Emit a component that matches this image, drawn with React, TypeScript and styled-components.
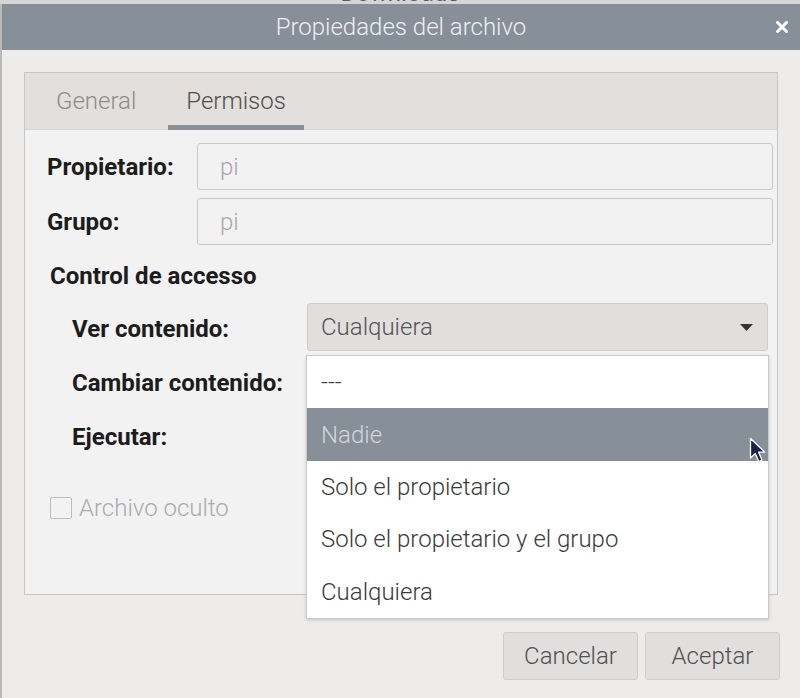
import styled, { createGlobalStyle } from 'styled-components';
import { FC } from 'react';

const GlobalStyle = createGlobalStyle`
  html, body { margin: 0; padding: 0; }
  body {
    font-family: Roboto, "Noto Sans", sans-serif;
    background: #c4c4c4;
  }
`;

const Screen = styled.div`
  width: 800px;
  height: 698px;
  overflow: hidden;
  display: flex;
  flex-direction: column;
  background: #b9b9b9;
`;

const TopStrip = styled.div`
  height: 4px;
  flex-shrink: 0;
  overflow: hidden;
  text-align: center;
  background: #d6d6d6;
`;

const BackdropText = styled.div`
  font-size: 24px;
  line-height: 24px;
  margin-top: -19px;
  color: #5a5a5a;
`;

const Window = styled.div`
  flex: 1;
  margin-left: 2px;
  background: #edecea;
  display: flex;
  flex-direction: column;
`;

const TitleBar = styled.div`
  height: 46px;
  flex-shrink: 0;
  background: #878f98;
  display: grid;
  grid-template-columns: 1fr auto 1fr;
  align-items: center;
`;

const Title = styled.div`
  grid-column: 2;
  font-size: 24px;
  font-weight: 300;
  color: #eef0f2;
`;

const CloseButton = styled.div`
  justify-self: end;
  margin-right: 12px;
  width: 12px;
  height: 12px;
  display: flex;
`;

const Body = styled.div`
  padding: 22px 22px 0 22px;
  display: flex;
  flex-direction: column;
`;

const Notebook = styled.div`
  height: 523px;
  box-sizing: border-box;
  border: 1px solid #c6c6c6;
  background: #f2f2f2;
  display: flex;
  flex-direction: column;
`;

const TabBar = styled.div`
  height: 57px;
  flex-shrink: 0;
  box-sizing: border-box;
  display: flex;
  gap: 14px;
  padding-left: 13px;
  background: #e2dfdc;
  border-bottom: 1px solid #d8d5d2;
`;

const Tab = styled.div<{ $active?: boolean }>`
  display: flex;
  align-items: center;
  padding: 3px 18px 0 18px;
  font-size: 24px;
  font-weight: 300;
  color: ${p => (p.$active ? '#4e4e4e' : '#8c8c8c')};
  border-bottom: 5px solid ${p => (p.$active ? '#878f98' : 'transparent')};
  margin-bottom: -1px;
`;

const Content = styled.div`
  padding: 13px 4px 0 22px;
  display: flex;
  flex-direction: column;
`;

const FieldGrid = styled.div`
  display: grid;
  grid-template-columns: 150px 1fr;
  row-gap: 8px;
  align-items: center;
`;

const Label = styled.div`
  font-size: 24px;
  font-weight: 700;
  color: #1c1c1c;
  white-space: nowrap;
`;

const AccessLabel = styled(Label)`
  padding-top: 3px;
`;

const Entry = styled.div`
  height: 47px;
  box-sizing: border-box;
  border: 1px solid #c9c9c9;
  border-radius: 3px;
  padding-left: 22px;
  display: flex;
  align-items: center;
  font-size: 24px;
  font-weight: 300;
  color: #a8a8a8;
`;

const SectionTitle = styled(Label)`
  margin-top: 16px;
  padding-left: 3px;
  line-height: 30px;
`;

const AccessGrid = styled.div`
  margin-top: 12px;
  padding-left: 25px;
  margin-right: 5px;
  display: grid;
  grid-template-columns: 235px 1fr;
  row-gap: 6px;
  align-items: center;
`;

const Combo = styled.div`
  position: relative;
  height: 48px;
  box-sizing: border-box;
  background: #e0dfdd;
  border: 1px solid #d0cecb;
  border-radius: 3px;
  padding: 0 14px 0 13px;
  display: flex;
  justify-content: space-between;
  align-items: center;
  font-size: 24px;
  font-weight: 300;
  color: #545454;
`;

const Popup = styled.div`
  position: absolute;
  top: calc(100% + 5px);
  left: -2px;
  right: -2px;
  z-index: 2;
  background: #ffffff;
  border: 1px solid #cbcbcb;
  box-shadow: 0 1px 3px rgba(0, 0, 0, 0.18);
`;

const Option = styled.div<{ $hover?: boolean }>`
  position: relative;
  height: 52.4px;
  padding-left: 14px;
  display: flex;
  align-items: center;
  font-size: 24px;
  font-weight: 300;
  color: ${p => (p.$hover ? '#d3d6da' : '#3a3a3a')};
  background: ${p => (p.$hover ? '#878f98' : '#ffffff')};
`;

const Pointer = styled.svg`
  position: absolute;
  right: 2px;
  top: 29px;
  z-index: 3;
`;

const CheckRow = styled.div`
  margin-top: 35px;
  padding-left: 3px;
  display: flex;
  align-items: center;
  gap: 7px;
  font-size: 24px;
  font-weight: 300;
  color: #ababab;
`;

const CheckBox = styled.div`
  width: 22px;
  height: 22px;
  box-sizing: border-box;
  border: 1px solid #bcbcbc;
  border-radius: 2px;
`;

const ButtonRow = styled.div`
  margin-top: 37px;
  margin-right: -2px;
  display: flex;
  justify-content: flex-end;
  gap: 7px;
`;

const Button = styled.div`
  width: 135px;
  height: 48px;
  box-sizing: border-box;
  background: #e0dfdd;
  border: 1px solid #d0cecb;
  border-radius: 3px;
  display: flex;
  align-items: center;
  justify-content: center;
  font-size: 24px;
  font-weight: 300;
  color: #505050;
`;

const options = [
  '---',
  'Nadie',
  'Solo el propietario',
  'Solo el propietario y el grupo',
  'Cualquiera',
];

const DropArrow: FC = () => (
  <svg width="13" height="7" viewBox="0 0 13 7">
    <path d="M0 0 L13 0 L6.5 7 Z" fill="#333333" />
  </svg>
);

export default function App() {
  return (
    <>
      <GlobalStyle />
      <Screen>
        <TopStrip>
          <BackdropText>Downloads</BackdropText>
        </TopStrip>
        <Window>
          <TitleBar>
            <Title>Propiedades del archivo</Title>
            <CloseButton>
              <svg width="12" height="12" viewBox="0 0 12 12">
                <path d="M1.5 1.5 L10.5 10.5 M10.5 1.5 L1.5 10.5" stroke="#ffffff" strokeWidth="3" strokeLinecap="square" />
              </svg>
            </CloseButton>
          </TitleBar>
          <Body>
            <Notebook>
              <TabBar>
                <Tab>General</Tab>
                <Tab $active>Permisos</Tab>
              </TabBar>
              <Content>
                <FieldGrid>
                  <Label>Propietario:</Label>
                  <Entry>pi</Entry>
                  <Label>Grupo:</Label>
                  <Entry>pi</Entry>
                </FieldGrid>
                <SectionTitle>Control de accesso</SectionTitle>
                <AccessGrid>
                  <AccessLabel>Ver contenido:</AccessLabel>
                  <Combo>
                    Cualquiera
                    <DropArrow />
                    <Popup>
                      {options.map(o => (
                        <Option key={o} $hover={o === 'Nadie'}>
                          {o}
                          {o === 'Nadie' && (
                            <Pointer width="17" height="26" viewBox="0 0 17 26">
                              <path
                                d="M1.5 1.5 L1.5 21 L6.3 16.4 L9.8 24.5 L13 23.1 L9.6 15.2 L15.8 15.2 Z"
                                fill="#1b2144"
                                stroke="#ffffff"
                                strokeWidth="1.3"
                                strokeLinejoin="round"
                              />
                            </Pointer>
                          )}
                        </Option>
                      ))}
                    </Popup>
                  </Combo>
                  <AccessLabel>Cambiar contenido:</AccessLabel>
                  <Combo />
                  <AccessLabel>Ejecutar:</AccessLabel>
                  <Combo />
                </AccessGrid>
                <CheckRow>
                  <CheckBox />
                  Archivo oculto
                </CheckRow>
              </Content>
            </Notebook>
            <ButtonRow>
              <Button>Cancelar</Button>
              <Button>Aceptar</Button>
            </ButtonRow>
          </Body>
        </Window>
      </Screen>
    </>
  );
}
